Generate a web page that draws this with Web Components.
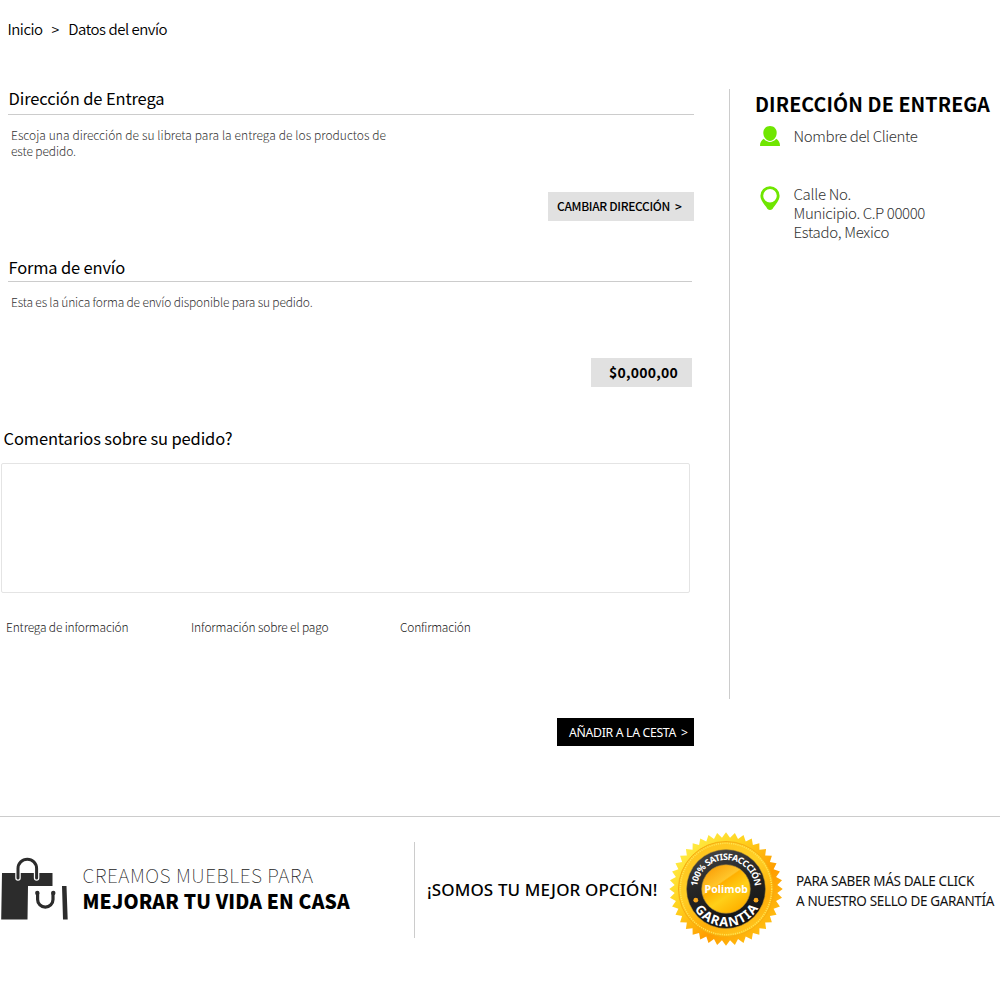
<!DOCTYPE html>
<html lang="es">
<head>
<meta charset="utf-8">
<title>Datos del envío</title>
<style>
html,body{margin:0;padding:0;background:#fff}
body{font-family:"Noto Sans CJK SC","Noto Sans",sans-serif;color:#000}
</style>
</head>
<body>
<shipping-page></shipping-page>
<script>
// One line of text whose tracking is adjusted to fill a given measure.
class FitText extends HTMLElement{
  constructor(){super();this.attachShadow({mode:'open'}).innerHTML=`<style>:host{display:block;white-space:pre;width:max-content}span{display:inline-block}</style><span><slot></slot></span>`}
  connectedCallback(){
    const w=+this.getAttribute('measure');if(!w)return;
    const s=this.shadowRoot.querySelector('span'),n=this.textContent.length;
    const d=w-s.getBoundingClientRect().width;
    if(this.hasAttribute('words'))s.style.wordSpacing=d/(this.textContent.split(' ').length-1)+'px';
    else s.style.letterSpacing=d/n+'px';
  }
}
class SectionTitle extends HTMLElement{
  constructor(){super();this.attachShadow({mode:'open'}).innerHTML=`<style>:host{display:block;box-sizing:border-box;height:27px;padding-left:.5px;border-bottom:1px solid #ccc;font-size:16.5px;line-height:20px}</style><slot></slot>`}
}
class ActionButton extends HTMLElement{
  constructor(){super();this.attachShadow({mode:'open'}).innerHTML=`<style>
  :host{display:block}button{all:unset;box-sizing:border-box;display:flex;width:100%;height:100%;align-items:center;justify-content:flex-start;gap:5px;padding-left:var(--pad);background:var(--bg,#e1e1e1);font:inherit;color:inherit;line-height:20px}</style><button><slot></slot></button>`}
}
class PersonIcon extends HTMLElement{
  constructor(){super();this.attachShadow({mode:'open'}).innerHTML=`<style>:host,svg{display:block}</style>
  <svg width="20" height="20" viewBox="0 0 20 20" fill="#6fe600"><path d="M0 20C0 16.5 1.3 14.500 3.800 12.800C7.500 17 12.500 17 16.200 12.800C18.700 14.500 20 16.500 20 20Z"/><path d="M10 0C14 0 16.700 2.800 16.700 6.800C16.700 11.200 13.600 15 10 15C6.400 15 3.300 11.200 3.300 6.800C3.300 2.800 6 0 10 0Z"/></svg>`}
}
class PinIcon extends HTMLElement{
  constructor(){super();this.attachShadow({mode:'open'}).innerHTML=`<style>:host,svg{display:block}</style>
  <svg width="20" height="25" viewBox="0 0 20 25"><path fill="#6fe600" fill-rule="evenodd" d="M10 .2A9.600 9.600 0 0 1 19.600 9.800C19.600 14.500 15.500 18.500 12.500 23Q10 25 7.500 23C4.500 18.500.4 14.500.4 9.800A9.600 9.600 0 0 1 10 .2ZM10 2.900A6.800 6.800 0 1 0 10 16.500A6.800 6.800 0 1 0 10 2.900Z"/></svg>`}
}
class BagsIcon extends HTMLElement{
  constructor(){super();this.attachShadow({mode:'open'}).innerHTML=`<style>:host,svg{display:block}</style>
  <svg width="68" height="64" viewBox="0 0 68 64"><path fill="#2c2c2c" d="M2 16H52.500V29H28L27.500 62.500H1.200ZM62 29H66.500L67.700 62.500H63Z"/>
  <g fill="none" stroke-linecap="round"><path stroke="#fff" stroke-width="5.500" d="M18 21V11.500A9.300 9.300 0 0 1 36.600 11.500V21"/><path stroke="#2c2c2c" stroke-width="3" d="M18 21V11.500A9.300 9.300 0 0 1 36.600 11.500V21"/><path stroke="#2c2c2c" stroke-width="3.200" d="M37.600 36V42.500A7.700 7.700 0 0 0 53 42.500V36"/></g><g fill="#2c2c2c"><circle cx="37.300" cy="36" r="2.200"/><circle cx="53.300" cy="36" r="2.200"/></g></svg>`}
}
class WarrantySeal extends HTMLElement{
  constructor(){super();
  let p='';const N=40;
  for(let i=0;i<N*2;i++){const a=(i/(N*2))*2*Math.PI-Math.PI/2,r=i%2?51.500:56.700;p+=(i?'L':'M')+(57+r*Math.cos(a)).toFixed(2)+' '+(57+r*Math.sin(a)).toFixed(2)}
  this.attachShadow({mode:'open'}).innerHTML=`<style>:host,svg{display:block}text{font-family:"Noto Sans","Open Sans",sans-serif;font-weight:700;fill:#fff}</style>
  <svg width="114" height="114" viewBox="0 0 114 114"><defs>
  <linearGradient id="o" x1=".1" y1=".1" x2=".85" y2=".85"><stop offset="0" stop-color="#fff04a"/><stop offset=".35" stop-color="#ffd21e"/><stop offset=".7" stop-color="#ff9d00"/><stop offset="1" stop-color="#ffbd12"/></linearGradient>
  <linearGradient id="m" x1=".2" y1="0" x2=".7" y2="1"><stop offset="0" stop-color="#ffc21c"/><stop offset=".4" stop-color="#ffcf25"/><stop offset=".75" stop-color="#ffad08"/><stop offset="1" stop-color="#ffc821"/></linearGradient>
  <linearGradient id="c" x1=".2" y1=".1" x2=".75" y2=".9"><stop offset="0" stop-color="#fba50c"/><stop offset=".33" stop-color="#ffc62b"/><stop offset=".36" stop-color="#ffb000"/><stop offset=".65" stop-color="#ffcf18"/><stop offset="1" stop-color="#ffb300"/></linearGradient>
  <linearGradient id="k" x1="0" y1="0" x2=".3" y2="1"><stop offset="0" stop-color="#4a4a4a"/><stop offset=".5" stop-color="#262626"/><stop offset="1" stop-color="#141414"/></linearGradient>
  <path id="t" d="M28 57A29 29 0 0 1 86 57"/><path id="b" d="M19.500 57A37.500 37.500 0 0 0 94.500 57"/></defs>
  <path fill="url(#o)" d="${p}Z"/><circle cx="57" cy="57" r="47.500" fill="url(#m)" stroke="#f6ad10" stroke-width="1"/>
  <circle cx="57" cy="57" r="45.700" fill="none" stroke="#ffe250" stroke-width="1.500" stroke-dasharray="1.200 1"/>
  <circle cx="57" cy="57" r="39.500" fill="url(#k)" stroke="#b8902c" stroke-width=".5"/><circle cx="57" cy="57" r="24.300" fill="url(#c)" stroke="#a88635" stroke-width=".6"/>
  <circle cx="26.800" cy="68.200" r="2.400" fill="#f7a51b"/><circle cx="87" cy="68.200" r="2.400" fill="#f7a51b"/>
  <text font-size="9"><textPath href="#t" startOffset="2.500" textLength="86" lengthAdjust="spacing">100% SATISFACCCIÓN</textPath></text>
  <text font-size="13"><textPath href="#b" startOffset="21.500" textLength="76" lengthAdjust="spacing">GARANTIA</textPath></text>
  <text x="35.500" y="61" font-size="10.500" textLength="43.500">Polimob</text></svg>`}
}
class ShippingForm extends HTMLElement{
  constructor(){super();this.attachShadow({mode:'open'}).innerHTML=`<style>
  :host{display:block;width:694px}
  nav{display:flex;height:20px;padding:19px 0 0 7.500px;font-size:15px;line-height:20px;font-weight:350}
  nav fit-text:nth-child(2){margin:0 9px 0 9px;font-size:14px}
  section{box-sizing:border-box;display:flow-root}
  .a{height:170px;margin-top:49px;padding-left:8px}
  .a section-title,.b section-title{width:685.500px}
  .b section-title{width:684px;height:25px}
  .copy{margin:12px 0 0 3px;font-size:12px;line-height:16px;font-weight:300;color:#333}
  .a action-button{--pad:9px;width:146px;height:28.500px;margin:33px 0 0 540px;font-size:12px;font-weight:500}
  .b{height:170px;padding-left:8px;margin-top:-1px}
  .b .copy{margin-top:12px}
  .price{display:flex;align-items:center;width:101px;height:28.500px;box-sizing:border-box;margin:48px 0 0 583px;padding-left:18px;background:#e1e1e1;font-size:14px;font-weight:700;line-height:20px}
  .c{padding-left:1px}
  .c>fit-text{margin:1px 0 0 2.500px;font-size:16.500px;line-height:20px}
  textarea{display:block;box-sizing:border-box;width:689px;height:129.500px;margin:15px 0 0;padding:0;border:1.500px solid #e4e4e4;border-radius:2px;background:#fff;resize:none;outline:0}
  .steps{display:grid;grid-template-columns:185px 209px auto;padding-left:5px;margin-top:25px;height:20px;font-size:12px;line-height:18px;font-weight:300;color:#222}
  .add{--bg:#000;--pad:12px;width:137px;height:28.500px;margin:80px 0 0 557px;color:#fff;font-family:"Noto Sans",sans-serif;font-size:12.300px}
  .add fit-text{padding-top:2px}
  </style>
  <nav><fit-text measure="35">Inicio</fit-text><fit-text>&gt;</fit-text><fit-text measure="99">Datos del envío</fit-text></nav>
  <section class="a"><section-title><fit-text measure="156">Dirección de Entrega</fit-text></section-title>
  <div class="copy"><fit-text measure="375" words>Escoja una dirección de su libreta para la entrega de los productos de</fit-text><fit-text measure="65">este pedido.</fit-text></div>
  <action-button><fit-text measure="113">CAMBIAR DIRECCIÓN</fit-text><fit-text>&gt;</fit-text></action-button></section>
  <section class="b"><section-title><fit-text measure="116.500">Forma de envío</fit-text></section-title>
  <div class="copy"><fit-text measure="301.500">Esta es la única forma de envío disponible para su pedido.</fit-text></div>
  <div class="price"><fit-text measure="69">$0,000,00</fit-text></div></section>
  <section class="c"><fit-text measure="229">Comentarios sobre su pedido?</fit-text><textarea aria-label="Comentarios"></textarea>
  <div class="steps"><fit-text measure="122.500">Entrega de información</fit-text><fit-text measure="137.500">Información sobre el pago</fit-text><fit-text measure="70.500">Confirmación</fit-text></div></section>
  <action-button class="add"><fit-text measure="107">AÑADIR A LA CESTA</fit-text><fit-text>&gt;</fit-text></action-button>`}
}
class DeliveryAside extends HTMLElement{
  constructor(){super();this.attachShadow({mode:'open'}).innerHTML=`<style>
  :host{display:block;box-sizing:border-box;width:271px;height:610px;margin-top:89px;border-left:1px solid #ccc;padding:3px 0 0 25px}
  h2{margin:0;font-size:19.600px;line-height:24px;font-weight:700}
  .row{display:grid;grid-template-columns:20px auto;gap:13.500px;padding-left:5px;font-size:15px;line-height:19px;font-weight:300;color:#333}
  .n{margin-top:10px;height:60px}.l pin-icon{margin-left:-.2px}.l div{margin-top:-2px}
  </style><h2><fit-text measure="235">DIRECCIÓN DE ENTREGA</fit-text></h2>
  <div class="row n"><person-icon></person-icon><div><fit-text measure="124">Nombre del Cliente</fit-text></div></div>
  <div class="row l"><pin-icon></pin-icon><div><fit-text measure="57.500">Calle No.</fit-text><fit-text measure="131.500">Municipio. C.P 00000</fit-text><fit-text measure="95.500">Estado, Mexico</fit-text></div></div>`}
}
class PromoFooter extends HTMLElement{
  constructor(){super();this.attachShadow({mode:'open'}).innerHTML=`<style>
  :host{display:flex;box-sizing:border-box;height:167px;border-top:1px solid #ccc}
  .left{display:flex;box-sizing:border-box;width:415px;height:96px;margin-top:25px;border-right:1px solid #ccc}
  bags-icon{margin-top:15px}.slogan{margin:20px 0 0 14.500px;font-size:19.300px;line-height:26px}
  .thin{font-weight:100;color:#222}.black{font-weight:900}
  .best{margin:60px 0 0 12px;width:242px;font:500 17px/26px "Noto Sans",sans-serif}
  warranty-seal{margin-top:14.500px;margin-left:-.5px}
  .more{margin:54px 0 0 13.500px;font:400 13.500px/20px "Noto Sans",sans-serif;color:#111}
  </style><div class="left"><bags-icon></bags-icon><div class="slogan"><fit-text class="thin" measure="231">CREAMOS MUEBLES PARA</fit-text><fit-text class="black" measure="267.500">MEJORAR TU VIDA EN CASA</fit-text></div></div>
  <div class="best"><fit-text measure="230.500">¡SOMOS TU MEJOR OPCIÓN!</fit-text></div><warranty-seal></warranty-seal>
  <div class="more"><fit-text measure="178">PARA SABER MÁS DALE CLICK</fit-text><fit-text measure="198">A NUESTRO SELLO DE GARANTÍA</fit-text></div>`}
}
class ShippingPage extends HTMLElement{
  constructor(){super();this.attachShadow({mode:'open'}).innerHTML=`<style>:host{display:block;width:1000px;height:983px;overflow:hidden}main{display:flex;justify-content:space-between;height:816px}</style>
  <main><shipping-form></shipping-form><delivery-aside></delivery-aside></main><promo-footer></promo-footer>`}
}
for(const [n,c] of Object.entries({'fit-text':FitText,'section-title':SectionTitle,'action-button':ActionButton,'person-icon':PersonIcon,'pin-icon':PinIcon,'bags-icon':BagsIcon,'warranty-seal':WarrantySeal,'shipping-form':ShippingForm,'delivery-aside':DeliveryAside,'promo-footer':PromoFooter,'shipping-page':ShippingPage}))customElements.define(n,c);
</script>
</body>
</html>
